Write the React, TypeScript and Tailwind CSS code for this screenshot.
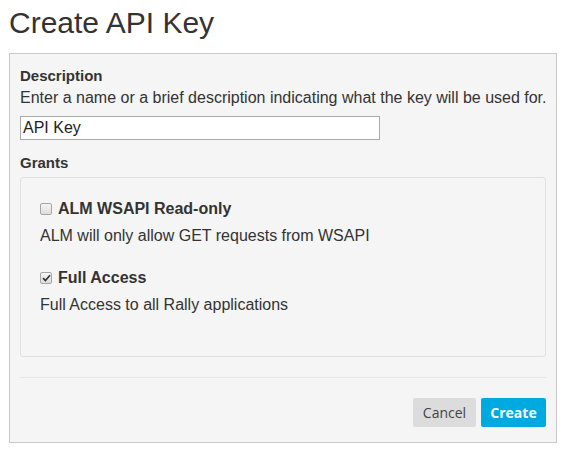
function Box({ checked }: { checked?: boolean }) {
  return (
    <span className="w-[12px] h-[12px] border border-[#a6a6a6] rounded-[2px] bg-gradient-to-b from-[#f4f4f4] to-[#dedede] flex items-center justify-center shrink-0">
      {checked && (
        <svg width="9" height="8" viewBox="0 0 9 8">
          <path d="M1 4.2 L3.4 6.6 L8 1.2" fill="none" stroke="#333" strokeWidth="1.7" />
        </svg>
      )}
    </span>
  );
}

export default function App() {
  return (
    <div className="w-[568px] h-[456px] bg-white text-[#333] font-['Liberation_Sans',Arial,sans-serif] overflow-hidden">
      <div className="h-[53px] pl-[9px] pt-[8px]">
        <h1 className="text-[30px] leading-none font-normal text-[#333]">Create API Key</h1>
      </div>

      <div className="ml-[9px] w-[548px] h-[390px] border border-[#c8c8c8] bg-[#f5f5f5] px-[10px] pt-[12px] flex flex-col">
        <div className="text-[15px] font-bold leading-[20px]">Description</div>
        <div className="mt-[1px] text-[16px] leading-[21px] whitespace-nowrap">
          Enter a name or a brief description indicating what the key will be used for.
        </div>
        <input
          defaultValue="API Key"
          className="mt-[8px] w-[360px] h-[24px] border border-[#a9a9a9] bg-white px-[2px] text-[16px] text-[#222] outline-none"
        />

        <div className="mt-[13px] text-[15px] font-bold leading-[20px]">Grants</div>
        <div className="mt-[4px] h-[180px] border border-[#e0e0e0] rounded-[3px] px-[19px] pt-[21px]">
          <label className="flex items-center gap-[6px] text-[16px] font-bold leading-[20px]">
            <Box />
            ALM WSAPI Read-only
          </label>
          <div className="mt-[7px] text-[16px] leading-[20px]">ALM will only allow GET requests from WSAPI</div>

          <label className="mt-[22px] flex items-center gap-[6px] text-[16px] font-bold leading-[20px]">
            <Box checked />
            Full Access
          </label>
          <div className="mt-[7px] text-[16px] leading-[20px]">Full Access to all Rally applications</div>
        </div>

        <div className="mt-[20px] border-t border-[#e6e6e6]" />

        <div className="mt-[20px] flex justify-end gap-[5px] font-['Open_Sans',sans-serif]">
          <button className="w-[63px] h-[29px] rounded-[2px] bg-[#dcdcdc] text-[14px] text-[#444]">Cancel</button>
          <button className="w-[65px] h-[29px] rounded-[2px] bg-[#00a9e0] text-[14px] font-bold text-white">Create</button>
        </div>
      </div>
    </div>
  );
}
